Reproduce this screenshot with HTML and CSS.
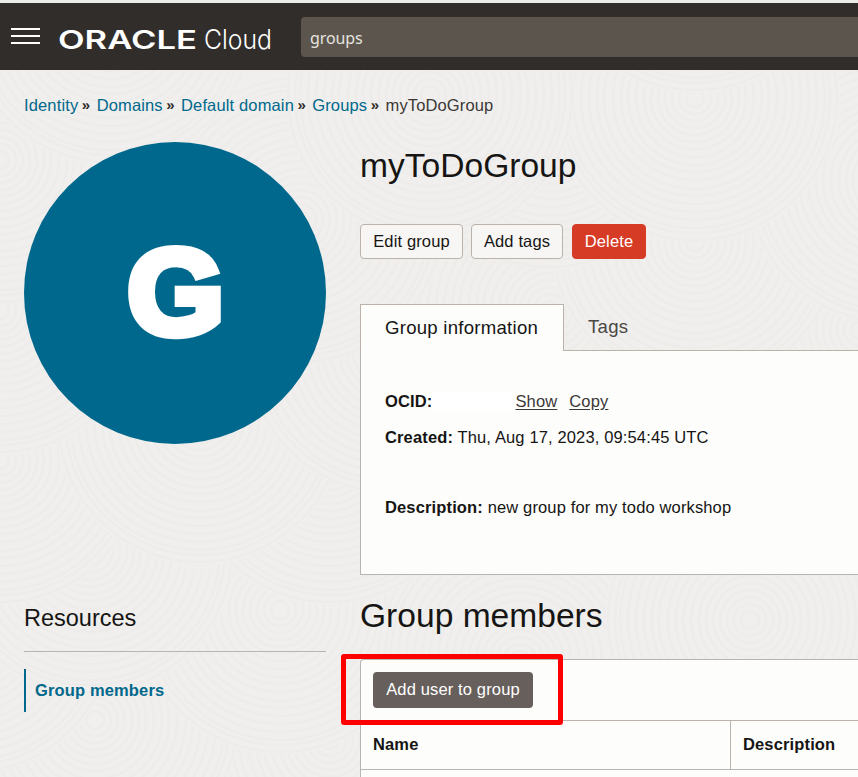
FILE: index.html
```html
<!DOCTYPE html>
<html lang="en">
<head>
<meta charset="utf-8">
<title>myToDoGroup</title>
<link rel="stylesheet" href="styles.css">
</head>
<body>
<div class="app">
  <svg class="texture" width="858" height="707" aria-hidden="true">
    <defs>
      <g id="rings">
        <circle r="145" class="disc"/>
        <circle r="142"/><circle r="135"/><circle r="130"/><circle r="122"/><circle r="114"/><circle r="106"/><circle r="98"/><circle r="91"/><circle r="82"/><circle r="74"/><circle r="67"/><circle r="59"/><circle r="51"/><circle r="44"/><circle r="37"/><circle r="30"/><circle r="23"/><circle r="16"/><circle r="9"/>
      </g>
    </defs>
    <use href="#rings" x="-20" y="760"/><use href="#rings" x="240" y="770"/><use href="#rings" x="330" y="670"/>
    <use href="#rings" x="95" y="650"/><use href="#rings" x="-30" y="560"/><use href="#rings" x="280" y="540"/>
    <use href="#rings" x="520" y="590"/><use href="#rings" x="750" y="550"/><use href="#rings" x="90" y="480"/>
    <use href="#rings" x="330" y="390"/><use href="#rings" x="0" y="390"/><use href="#rings" x="200" y="350"/>
    <use href="#rings" x="860" y="260"/><use href="#rings" x="390" y="280"/><use href="#rings" x="550" y="240"/>
    <use href="#rings" x="0" y="240"/><use href="#rings" x="695" y="172"/><use href="#rings" x="300" y="150"/>
    <use href="#rings" x="890" y="110"/><use href="#rings" x="550" y="55"/><use href="#rings" x="695" y="28"/>
    <use href="#rings" x="0" y="90"/><use href="#rings" x="430" y="25"/><use href="#rings" x="110" y="-50"/>
    <use href="#rings" x="695" y="-122"/>
  </svg>

  <header class="topbar">
    <svg class="menu" width="29" height="16" viewBox="0 0 29 16"><path d="M0 1h29M0 8h29M0 15h29"/></svg>
    <svg class="logo" width="222" height="36" viewBox="0 0 222 36">
      <text class="logo-oracle" x="-1" y="24" textLength="139" lengthAdjust="spacingAndGlyphs">ORACLE</text>
      <text class="logo-cloud" x="145" y="24" textLength="68" lengthAdjust="spacingAndGlyphs">Cloud</text>
    </svg>
    <div class="search">groups</div>
  </header>

  <nav class="crumbs">
    <a>Identity</a><i>»</i><a>Domains</a><i>»</i><a>Default domain</a><i>»</i><a>Groups</a><i>»</i><span>myToDoGroup</span>
  </nav>

  <main class="columns">
    <aside class="side">
      <svg class="avatar" width="302" height="302" viewBox="0 0 302 302">
        <circle cx="151" cy="151" r="151"/>
        <text x="103.5" y="191.5" textLength="96.5" lengthAdjust="spacingAndGlyphs">G</text>
      </svg>
      <h3>Resources</h3>
      <a class="resource">Group members</a>
    </aside>

    <section class="content">
      <h1>myToDoGroup</h1>
      <div class="actions">
        <button class="btn edit">Edit group</button>
        <button class="btn tags">Add tags</button>
        <button class="btn delete">Delete</button>
      </div>
      <div class="tabs">
        <div class="tab active">Group information</div>
        <div class="tab">Tags</div>
      </div>
      <div class="info">
        <p class="ocid"><b>OCID:</b><span class="mask"></span><a class="show">Show</a><a>Copy</a></p>
        <p class="created"><b>Created:</b> Thu, Aug 17, 2023, 09:54:45 UTC</p>
        <p><b>Description:</b> new group for my todo workshop</p>
      </div>
      <h2>Group members</h2>
      <div class="table">
        <div class="toolbar"><button class="btn add">Add user to group</button><div class="highlight"></div></div>
        <div class="row"><div class="cell name">Name</div><div class="cell">Description</div></div>
      </div>
    </section>
  </main>
</div>
</body>
</html>
```
FILE: styles.css
```css
* { box-sizing: border-box; }
body { margin: 0; background: #f0efed; color: #161513; font: 16.5px/20px "Liberation Sans", Arial, sans-serif; letter-spacing: 0.14px; }
h1, h2, h3, p { margin: 0; font-weight: normal; }
.app { position: relative; width: 858px; height: 777px; overflow: hidden; border-top: 3px solid #e9eeea; }
.texture { position: absolute; left: 0; top: 67px; z-index: -1; fill: none; stroke: #edecea; stroke-width: 2.4; }
.texture .disc { fill: #f0efed; stroke: none; }

.topbar { display: flex; height: 67px; background: #312d2a; padding: 14px 0 0 11px; }
.menu { margin-top: 11px; stroke: #fff; stroke-width: 2; flex: none; }
.logo { margin: 8px 0 0 19px; flex: none; fill: #fff; letter-spacing: 0; }
.logo-oracle { font: 600 25.5px Inter, sans-serif; }
.logo-cloud { font: 300 26.5px Inter, sans-serif; }
.search { flex: 1; margin-left: 20px; height: 40px; padding: 11px 9px; border-radius: 4px 0 0 4px; background: #5b554e; color: #e6e3df; font: 16px/20px "Noto Sans", sans-serif; letter-spacing: -0.1px; }

.crumbs { display: flex; height: 72px; padding: 25px 24px 0; color: #3b3835; }
.crumbs a { color: #00688c; }
.crumbs i { width: 18.3px; padding-left: 3.5px; font-style: normal; font-weight: bold; font-size: 15px; line-height: 20px; color: #312d2a; }

.columns { display: flex; gap: 34px; padding-left: 24px; }
.side { width: 302px; flex: none; }
.avatar { display: block; fill: #00688c; }
.avatar text { font: bold 120px "Liberation Sans", sans-serif; fill: #fff; stroke: #fff; stroke-width: 8.5; letter-spacing: 0; }
.side h3 { height: 208px; padding-top: 160px; font-size: 23.5px; line-height: 28px; letter-spacing: 0; border-bottom: 1px solid #b8b5b0; }
.resource { display: block; margin-top: 17px; height: 43px; padding: 11px 0 0 9px; border-left: 2px solid #00688c; color: #00688c; font-weight: bold; }

.content { flex: 1; min-width: 0; }
h1, h2 { font-size: 33.6px; line-height: 44px; letter-spacing: 0; }
h1 { height: 82px; padding-top: 2px; }
.actions { display: flex; height: 80px; }
.btn { height: 35px; padding: 0 0 2px; border: 1px solid #bbb3ab; border-radius: 4px; background: #f7f6f4; color: #161513; font: inherit; letter-spacing: inherit; white-space: nowrap; }
.edit { width: 103px; margin-right: 8px; }
.tags { width: 92px; margin-right: 9px; }
.delete { width: 74px; background: #d63b25; border-color: #d63b25; color: #fff; }
.tabs { display: flex; height: 47px; font-size: 18.6px; letter-spacing: 0.25px; color: #4b4744; }
.tab { flex: 1; padding: 13px 24px 0; border-bottom: 1px solid #bbb3ab; }
.tab.active { flex: none; width: 204px; border: 1px solid #bbb3ab; border-bottom: 0; background: #fdfdfc; color: #161513; white-space: nowrap; }
.info { height: 224px; padding: 40px 24px; border: solid #b8b5b0; border-width: 0 0 1px 1px; background: #fdfdfc; }
.ocid { display: flex; margin-bottom: 16px; }
.ocid a { color: #3b3835; text-decoration: underline; text-underline-offset: 2px; }
.mask { width: 83px; height: 20px; background: #fff; }
.show { margin-right: 12px; }
.created { margin-bottom: 50px; }
h2 { height: 84px; padding-top: 19px; }
.table { height: 130px; border: solid #b8b5b0; border-width: 1px 0 0 1px; border-top-left-radius: 4px; background: #fdfdfc; }
.toolbar { position: relative; height: 61px; padding: 12px; border-bottom: 1px solid #bbb3ab; }
.add { display: block; width: 160px; height: 36px; background: #665f5b; border: 0; color: #fff; }
.highlight { position: absolute; left: -20px; top: -6px; width: 222px; height: 71px; border: 5px solid #f00; border-radius: 3px; }
.row { display: flex; height: 49px; border-bottom: 1px solid #b8b5b0; font-weight: bold; }
.cell { padding: 13px 12px; }
.name { width: 370px; border-right: 1px solid #bbb3ab; }
```
